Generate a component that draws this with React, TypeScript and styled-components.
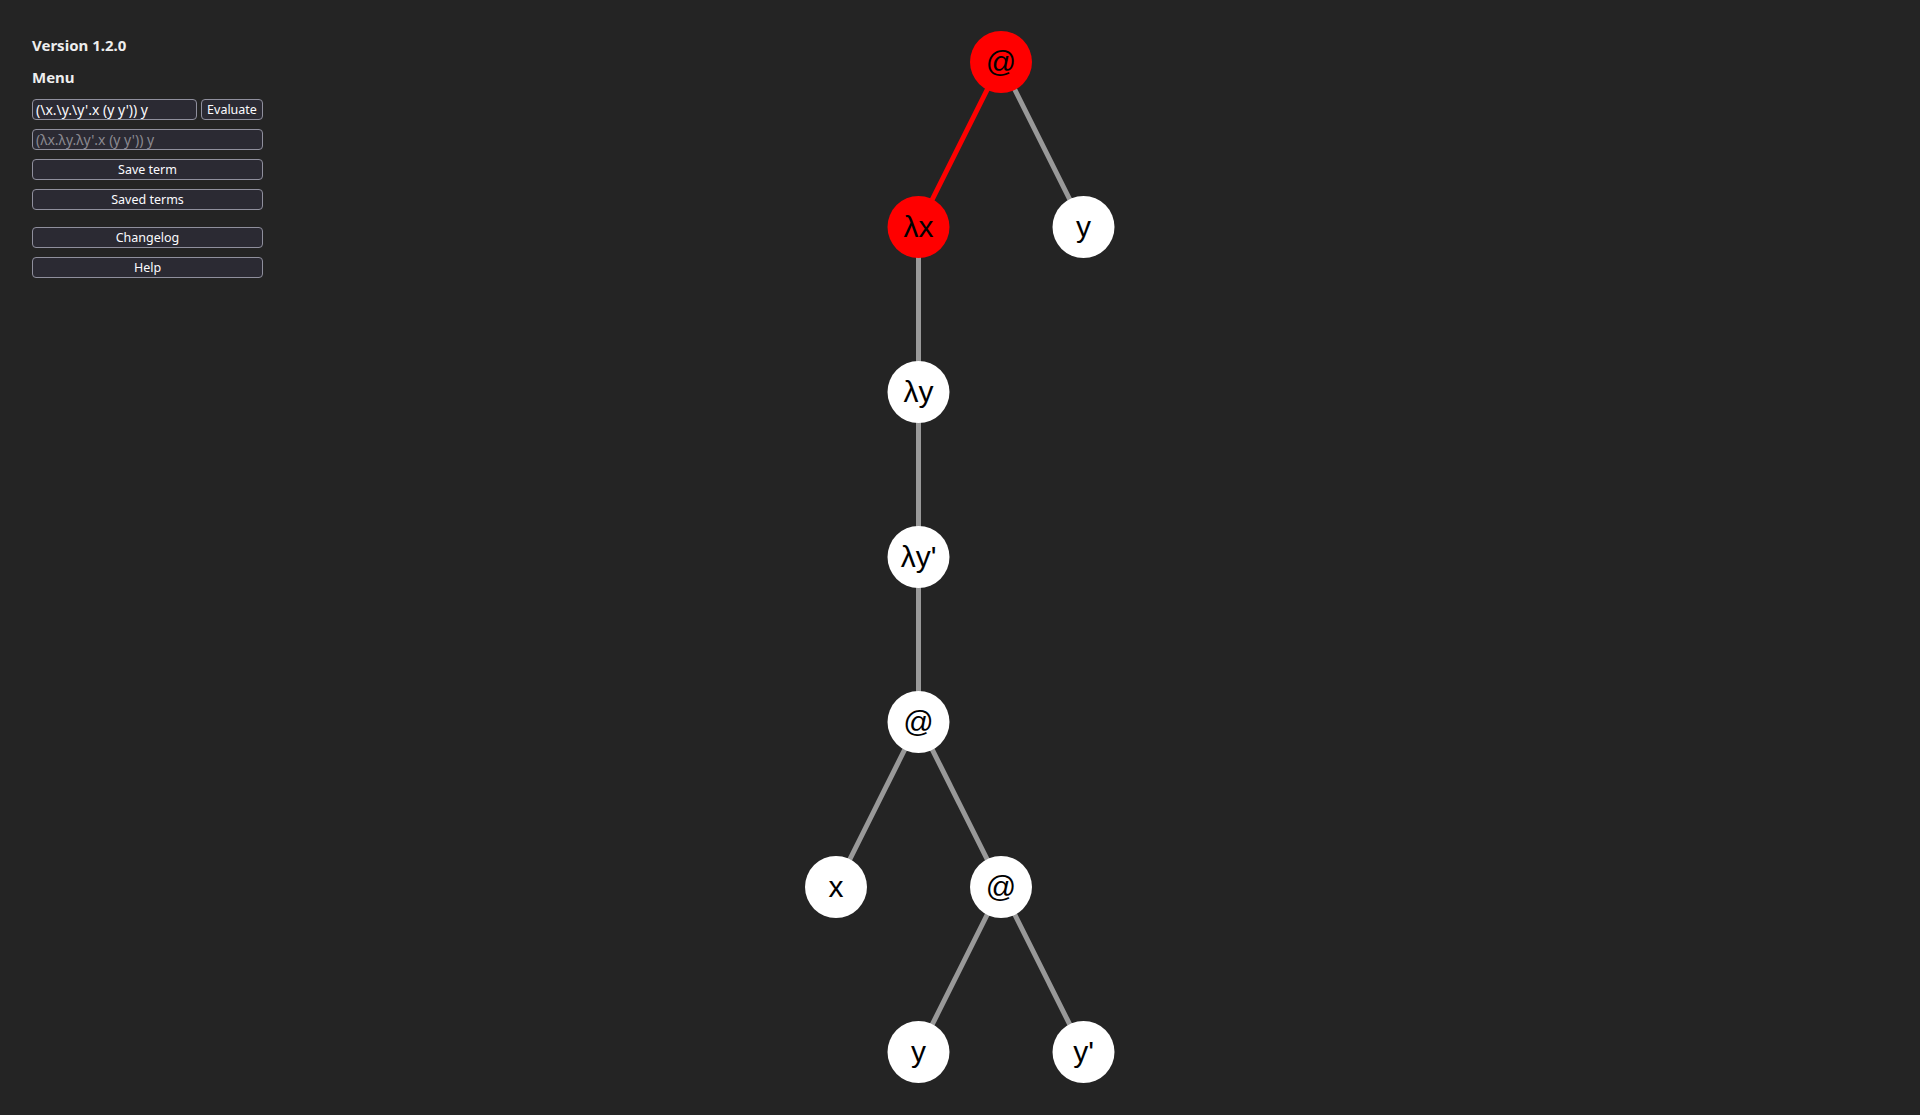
import React from "react"
import styled, { createGlobalStyle } from "styled-components"

const GlobalStyle = createGlobalStyle`
	html, body {
		margin: 0;
		padding: 0;
		background: #242424;
	}
	body {
		font-family: "Noto Sans", "Open Sans", sans-serif;
		color: #e8e8e8;
	}
`

const SIDEBAR_WIDTH = 280
const LEVEL_HEIGHT = 165
const COL_WIDTH = 82.5
const ROOT_X = 1001 - SIDEBAR_WIDTH
const ROOT_Y = 62
const NODE_RADIUS = 31

const Page = styled.div`
	display: grid;
	grid-template-columns: ${SIDEBAR_WIDTH}px 1fr;
	width: 100%;
	height: 1115px;
	overflow: hidden;
`

const Sidebar = styled.aside`
	display: flex;
	flex-direction: column;
	padding: 35px 0 0 32px;
	width: 231px;
`

const Title = styled.h3`
	margin: 0 0 12px;
	font-size: 15px;
	font-weight: 700;
	line-height: 20px;
	color: #eeeeee;
`

const Row = styled.div`
	display: flex;
	gap: 4px;
	margin-bottom: 9px;
`

const TermInput = styled.input<{ grow?: boolean }>`
	box-sizing: border-box;
	height: 21px;
	width: ${(p) => (p.grow ? "100%" : "165px")};
	padding: 0 3px;
	border: 1px solid #8f8f9d;
	border-radius: 4px;
	background: #2b2a33;
	color: #fbfbfe;
	font-family: "Noto Sans", sans-serif;
	font-size: 14px;
	outline: none;

	&::placeholder {
		color: #8a8990;
	}
`

const Button = styled.button<{ gapAbove?: number }>`
	box-sizing: border-box;
	height: 21px;
	width: 100%;
	margin-top: ${(p) => p.gapAbove || 0}px;
	margin-bottom: 9px;
	padding: 0 4px;
	border: 1px solid #8f8f9d;
	border-radius: 4px;
	background: #2b2a33;
	color: #fbfbfe;
	font-family: "Noto Sans", sans-serif;
	font-size: 12.5px;
	line-height: 19px;
	cursor: pointer;
`

const EvalButton = styled(Button)`
	width: auto;
	flex: 1;
	margin: 0;
`

const Canvas = styled.svg`
	display: block;
	width: 100%;
	height: 1115px;
`

type TreeNode = {
	id: string
	label: string
	col: number
	depth: number
	parent?: string
	active?: boolean
}

const nodes: TreeNode[] = [
	{ id: "root", label: "@", col: 0, depth: 0, active: true },
	{ id: "lx", label: "λx", col: -1, depth: 1, parent: "root", active: true },
	{ id: "y0", label: "y", col: 1, depth: 1, parent: "root" },
	{ id: "ly", label: "λy", col: -1, depth: 2, parent: "lx" },
	{ id: "lyp", label: "λy'", col: -1, depth: 3, parent: "ly" },
	{ id: "app1", label: "@", col: -1, depth: 4, parent: "lyp" },
	{ id: "x", label: "x", col: -2, depth: 5, parent: "app1" },
	{ id: "app2", label: "@", col: 0, depth: 5, parent: "app1" },
	{ id: "y1", label: "y", col: -1, depth: 6, parent: "app2" },
	{ id: "yp", label: "y'", col: 1, depth: 6, parent: "app2" },
]

const pos = (n: TreeNode) => ({
	x: ROOT_X + n.col * COL_WIDTH,
	y: ROOT_Y + n.depth * LEVEL_HEIGHT,
})

const byId = Object.fromEntries(nodes.map((n) => [n.id, n]))

const Tree: React.FC = () => (
	<Canvas>
		{nodes
			.filter((n) => n.parent)
			.map((n) => {
				const a = pos(byId[n.parent as string])
				const b = pos(n)
				const red = n.active && byId[n.parent as string].active
				return (
					<line
						key={`e-${n.id}`}
						x1={a.x}
						y1={a.y}
						x2={b.x}
						y2={b.y}
						stroke={red ? "#ff0000" : "#999999"}
						strokeWidth={5}
					/>
				)
			})}
		{nodes.map((n) => {
			const p = pos(n)
			return (
				<g key={n.id}>
					<circle cx={p.x} cy={p.y} r={NODE_RADIUS} fill={n.active ? "#ff0000" : "#ffffff"} />
					<text
						x={p.x}
						y={p.y + 10}
						textAnchor="middle"
						fontFamily='"Liberation Sans", Arial, sans-serif'
						fontSize={30}
						fill="#000000"
					>
						{n.label}
					</text>
				</g>
			)
		})}
	</Canvas>
)

const App: React.FC = () => {
	return (
		<>
			<GlobalStyle />
			<Page>
				<Sidebar>
					<Title>Version 1.2.0</Title>
					<Title>Menu</Title>
					<Row>
						<TermInput defaultValue="(\x.\y.\y'.x (y y')) y" />
						<EvalButton>Evaluate</EvalButton>
					</Row>
					<Row>
						<TermInput grow readOnly placeholder="(λx.λy.λy'.x (y y')) y" />
					</Row>
					<Button>Save term</Button>
					<Button>Saved terms</Button>
					<Button gapAbove={8}>Changelog</Button>
					<Button>Help</Button>
				</Sidebar>
				<Tree />
			</Page>
		</>
	)
}

export default App
